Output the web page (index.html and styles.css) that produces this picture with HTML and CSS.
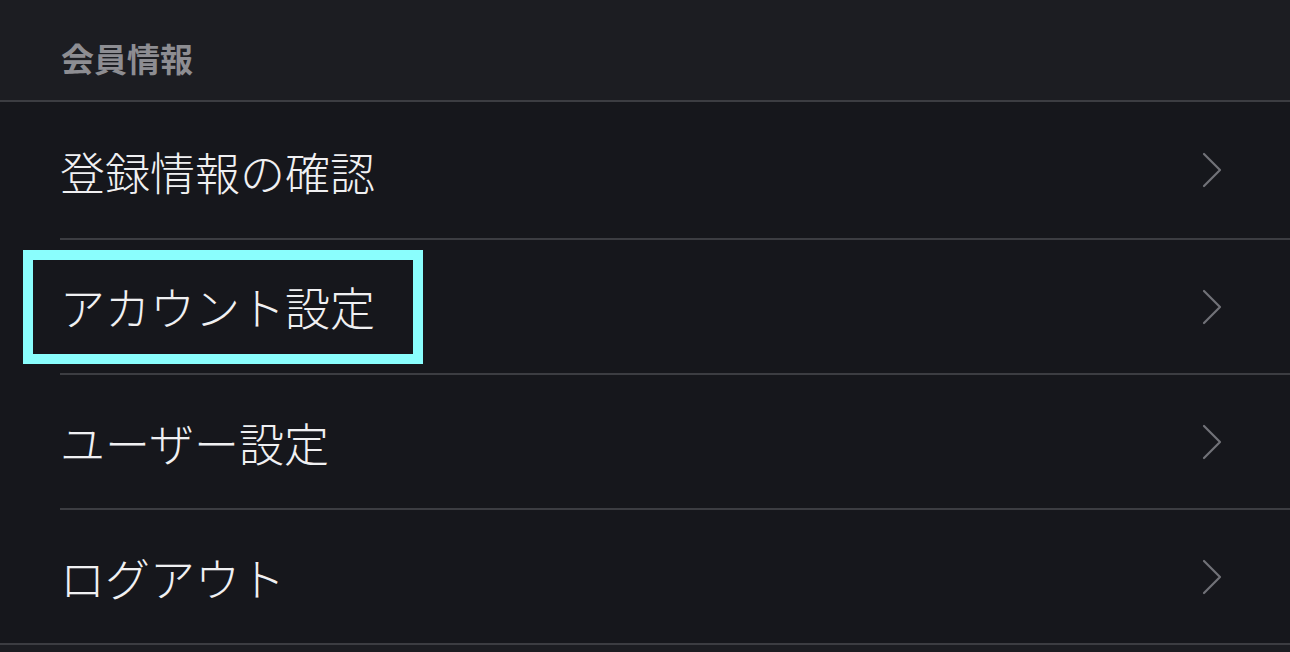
FILE: index.html
```html
<!DOCTYPE html>
<html lang="ja">
<head>
<meta charset="utf-8">
<link rel="stylesheet" href="styles.css">
</head>
<body>
<div class="page">
  <header class="section-head">会員情報</header>
  <ul class="menu">
    <li class="item first"><span class="label">登録情報の確認</span><svg class="chev" viewBox="0 0 20 36" width="20" height="36"><path d="M2 2 L18 18 L2 34" /></svg></li>
    <li class="item"><span class="label focused">アカウント設定</span><svg class="chev" viewBox="0 0 20 36" width="20" height="36"><path d="M2 2 L18 18 L2 34" /></svg></li>
    <li class="item"><span class="label">ユーザー設定</span><svg class="chev" viewBox="0 0 20 36" width="20" height="36"><path d="M2 2 L18 18 L2 34" /></svg></li>
    <li class="item last"><span class="label">ログアウト</span><svg class="chev" viewBox="0 0 20 36" width="20" height="36"><path d="M2 2 L18 18 L2 34" /></svg></li>
  </ul>
</div>
</body>
</html>
```
FILE: styles.css
```css
html, body {
  margin: 0;
  padding: 0;
  background: #1c1d22;
  font-family: "Noto Sans CJK JP", "Noto Sans", sans-serif;
}
.page {
  width: 1290px;
  height: 652px;
  overflow: hidden;
  background: #1c1d22;
}
.section-head {
  height: 102px;
  box-sizing: border-box;
  padding-left: 61px;
  padding-top: 16px;
  display: flex;
  align-items: center;
  font-size: 33px;
  font-weight: 700;
  color: #8d8d92;
  border-bottom: 2px solid #3c3d42;
  background: #1c1d22;
}
.menu {
  list-style: none;
  margin: 0;
  padding: 0;
  background: #16171c;
}
.item {
  height: 133px;
  margin-left: 60px;
  padding-right: 68px;
  display: flex;
  align-items: center;
  justify-content: space-between;
  border-bottom: 2px solid #3c3d42;
}
.item.first {
  height: 136px;
}
.item.last {
  margin-left: 0;
  padding-left: 60px;
}
.label {
  font-size: 45px;
  font-weight: 300;
  color: #f0f0f2;
  line-height: 1;
  padding-top: 2px;
}
.label.focused {
  outline: 10px solid #8afefd;
  outline-offset: 0;
  margin-left: -27px;
  padding: 24px 38px 25px 27px;
}
.chev {
  flex: none;
}
.chev path {
  fill: none;
  stroke: #717278;
  stroke-width: 2.2;
  stroke-linecap: round;
  stroke-linejoin: round;
}
```
